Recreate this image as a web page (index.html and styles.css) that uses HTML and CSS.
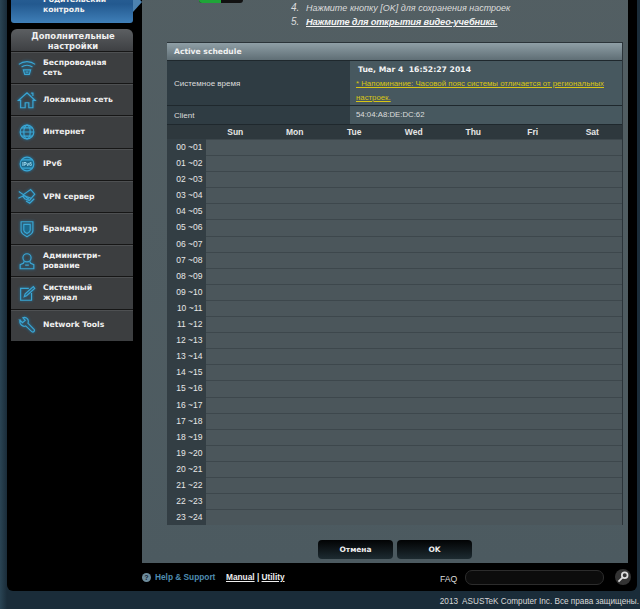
FILE: index.html
```html
<html>
	<head>
		<meta charset="UTF-8"/>
		<link rel="stylesheet" href="styles.css">
	</head>
	<body>
		<div class="frame">
			<div class="mainRow">
				<div class="side">
					<div class="parentItem">
						<svg class="parentIcon" viewBox="0 0 16 16"><rect x="1" y="1" width="14" height="14" rx="2" fill="#cfe6f5"/><path d="M6 7h4v5H6z" fill="#1f5d96"/><path d="M6.500 7V5a1.500 1.500 0 0 1 3 0v2" fill="none" stroke="#1f5d96"/></svg>
						<span>Родительский<br>контроль</span>
					</div>
					<div class="menu">
						<div class="menuHead">Дополнительные<br>настройки</div>
						<div class="menuItem">
							<svg class="icon" viewBox="0 0 22 22"><path d="M2 7c5-4 13-4 18 0M5 10c3.500-2.500 8.500-2.500 12 0"/><path d="M7 13h8l-1.500 5h-5z"/><path d="M9.500 15.500h3"/></svg>
							<span>Беспроводная<br>сеть</span>
						</div>
						<div class="menuItem">
							<svg class="icon" viewBox="0 0 22 22"><path d="M1.500 11.500 11 3l9 8.500h-2.500V19.500h-4.500v-5.500h-4v5.500H4V11.500z"/><path d="M15.500 3.500h2v3"/></svg>
							<span>Локальная сеть</span>
						</div>
						<div class="menuItem">
							<svg class="icon" viewBox="0 0 22 22"><circle cx="11" cy="11" r="7.500"/><ellipse cx="11" cy="11" rx="3.500" ry="7.500"/><path d="M3.500 11h15M5 6.500h12M5 15.500h12"/></svg>
							<span>Интернет</span>
						</div>
						<div class="menuItem">
							<svg class="icon" viewBox="0 0 22 22"><circle cx="11" cy="11" r="7.500" fill="#1d6a8c"/><path d="M5 6.500h12M5 15.500h12"/><text x="11" y="13" class="iconText">IPv6</text></svg>
							<span>IPv6</span>
						</div>
						<div class="menuItem">
							<svg class="icon" viewBox="0 0 22 22"><path d="M2 6l5 3.500 8-5.500 4.500 5-6 7-5-2-2.500-3.500M1.500 13.500l6-3 8 3M10 16.500l4 2.500 5-5"/><path d="M7 9.500l6 5"/></svg>
							<span>VPN сервер</span>
						</div>
						<div class="menuItem">
							<svg class="icon" viewBox="0 0 22 22"><path d="M4.500 3h13v10c0 3-3.500 5-6.500 6.500C8 18 4.500 16 4.500 13z"/><path d="M7.500 6h7v6.500c0 1.500-2 2.800-3.500 3.500-1.500-.7-3.500-2-3.500-3.500z" fill="#1d6a8c"/></svg>
							<span>Брандмауэр</span>
						</div>
						<div class="menuItem">
							<svg class="icon" viewBox="0 0 22 22"><circle cx="11" cy="7.500" r="4.500"/><path d="M8 11.500 7 13.500 3.500 15v4.500h15V15L15 13.500l-1-2M9 15.500h4"/></svg>
							<span>Администри-<br>рование</span>
						</div>
						<div class="menuItem">
							<svg class="icon" viewBox="0 0 22 22"><path d="M16 11v8H4V6h9"/><path d="M8 15l1-3 9-8 1.500 2-9 8z"/></svg>
							<span>Системный<br>журнал</span>
						</div>
						<div class="menuItem">
							<svg class="icon" viewBox="0 0 22 22"><path d="M3 5.500 6 8.500 9 6 6.500 3c2.500-1 6 .500 6 4 0 1-.2 1.500-.5 2l7 7c1 1.500-1 3.500-2.500 2.500l-7-6.500c-3 1.500-7.500-2-6-6.500z"/></svg>
							<span>Network Tools</span>
						</div>
					</div>
				</div>
				<div class="content">
					<div class="intro">
						<div class="toggle"><div class="toggleOn"></div></div>
						<div class="steps">
							<div class="step"><span class="stepNo">4.</span><span class="stepText">Нажмите кнопку [OK] для сохранения настроек</span></div>
							<div class="step"><span class="stepNo">5.</span><a class="stepLink" href="#">Нажмите для открытия видео-учебника.</a></div>
						</div>
					</div>
					<div class="schedule">
						<div class="scheduleTitle">Active schedule</div>
						<div class="infoRow">
							<div class="infoLabel">Системное время</div>
							<div class="infoValue">
								<div class="clock">Tue, Mar 4&nbsp; 16:52:27 2014</div>
								<a class="warn" href="#">* Напоминание: Часовой пояс системы отличается от региональных настроек.</a>
							</div>
						</div>
						<div class="infoRow">
							<div class="infoLabel">Client</div>
							<div class="infoValue clientValue">54:04:A8:DE:DC:62</div>
						</div>
						<div class="days">
							<div></div><div>Sun</div><div>Mon</div><div>Tue</div><div>Wed</div><div>Thu</div><div>Fri</div><div>Sat</div>
						</div>
						<div class="hour"><div class="hourName">00 ~01</div><div class="slots"></div></div>
						<div class="hour"><div class="hourName">01 ~02</div><div class="slots"></div></div>
						<div class="hour"><div class="hourName">02 ~03</div><div class="slots"></div></div>
						<div class="hour"><div class="hourName">03 ~04</div><div class="slots"></div></div>
						<div class="hour"><div class="hourName">04 ~05</div><div class="slots"></div></div>
						<div class="hour"><div class="hourName">05 ~06</div><div class="slots"></div></div>
						<div class="hour"><div class="hourName">06 ~07</div><div class="slots"></div></div>
						<div class="hour"><div class="hourName">07 ~08</div><div class="slots"></div></div>
						<div class="hour"><div class="hourName">08 ~09</div><div class="slots"></div></div>
						<div class="hour"><div class="hourName">09 ~10</div><div class="slots"></div></div>
						<div class="hour"><div class="hourName">10 ~11</div><div class="slots"></div></div>
						<div class="hour"><div class="hourName">11 ~12</div><div class="slots"></div></div>
						<div class="hour"><div class="hourName">12 ~13</div><div class="slots"></div></div>
						<div class="hour"><div class="hourName">13 ~14</div><div class="slots"></div></div>
						<div class="hour"><div class="hourName">14 ~15</div><div class="slots"></div></div>
						<div class="hour"><div class="hourName">15 ~16</div><div class="slots"></div></div>
						<div class="hour"><div class="hourName">16 ~17</div><div class="slots"></div></div>
						<div class="hour"><div class="hourName">17 ~18</div><div class="slots"></div></div>
						<div class="hour"><div class="hourName">18 ~19</div><div class="slots"></div></div>
						<div class="hour"><div class="hourName">19 ~20</div><div class="slots"></div></div>
						<div class="hour"><div class="hourName">20 ~21</div><div class="slots"></div></div>
						<div class="hour"><div class="hourName">21 ~22</div><div class="slots"></div></div>
						<div class="hour"><div class="hourName">22 ~23</div><div class="slots"></div></div>
						<div class="hour"><div class="hourName">23 ~24</div><div class="slots"></div></div>
					</div>
					<div class="buttons">
						<button type="button" class="btn">Отмена</button>
						<button type="button" class="btn">OK</button>
					</div>
				</div>
			</div>
			<div class="footer">
				<div class="helpIcon">?</div>
				<div class="helpText">Help &amp; Support</div>
				<div class="helpLinks"><a href="#">Manual</a> | <a href="#">Utility</a></div>
				<div class="faq">FAQ</div>
				<input type="text" class="faqBox"/>
				<div class="faqBtn">
					<svg viewBox="0 0 14 14"><circle cx="8.500" cy="5.500" r="2.500"/><path d="M6.500 7.500 3 11"/></svg>
				</div>
			</div>
		</div>
		<div class="copyright">2013&nbsp; ASUSTeK Computer Inc. Все права защищены.</div>
	</body>
</html>
```

FILE: styles.css
```css
html,body{
	margin:0;
	height:609px;
	overflow:hidden;
}
body{
	background:linear-gradient(90deg,#2a4454,#1a2c39 7px);
	font-family:"Liberation Sans",sans-serif;
	font-size:8px;
	color:#ddd;
}
a{
	color:inherit;
}
.frame{
	margin:-40px 3px 0 7px;
	height:631px;
	background:#000;
	border-radius:0 0 6px 6px;
	display:flex;
	flex-direction:column;
}
.mainRow{
	display:flex;
	height:603px;
}
.side{
	width:122px;
	margin:0 9px 0 4px;
	font-family:"DejaVu Sans",sans-serif;
	font-weight:bold;
	font-size:7.700px;
	line-height:9.500px;
	color:#f0f0f0;
}
.parentItem{
	position:relative;
	height:63px;
	box-sizing:border-box;
	padding:35px 0 0 32px;
	background:linear-gradient(#3d78b0,#23598f 70%,#3f7fb8);
	border-radius:0 0 3px 3px;
}
.parentItem:after{
	content:"";
	position:absolute;
	right:-9px;
	top:32px;
	border-left:9px solid #4c82b0;
	border-top:10px solid transparent;
	border-bottom:10px solid transparent;
}
.parentIcon{
	position:absolute;
	left:8px;
	top:26px;
	width:15px;
	height:15px;
}
.menu{
	margin-top:6px;
}
.menuHead{
	height:22px;
	box-sizing:border-box;
	padding:3px 0 0 2px;
	text-align:center;
	font-size:8.400px;
	background:linear-gradient(#5c5f62,#3e4043);
	border-radius:6px 6px 0 0;
}
.menuItem{
	height:32.200px;
	box-sizing:border-box;
	display:flex;
	align-items:center;
	padding-left:6px;
	background:#3c3e40;
	border-top:1px solid #161616;
	box-shadow:inset 0 1px #4e5052;
}
.icon{
	width:20px;
	height:20px;
	margin-right:6px;
	flex:none;
	fill:none;
	stroke:#3aa6d4;
	stroke-width:1.300;
	filter:drop-shadow(0 0 1.500px #1d7fb0);
}
.iconText{
	font:bold 5px "Liberation Sans",sans-serif;
	text-anchor:middle;
	fill:#a8e0f5;
	stroke:none;
}
.content{
	width:486px;
	height:603px;
	background:linear-gradient(#535f63,#4c5a60);
}
.intro{
	display:flex;
	height:68px;
	font-size:10px;
	font-style:italic;
	color:#dcdcdc;
}
.toggle{
	width:44px;
	height:12px;
	margin:31px 0 0 57px;
	background:#111;
	border-radius:0 0 3px 3px;
}
.toggleOn{
	width:22px;
	height:12px;
	background:#1fa538;
	border-radius:0 0 0 3px;
}
.steps{
	margin:41px 0 0 48px;
	line-height:14px;
}
.step{
	display:flex;
}
.stepNo{
	width:15px;
}
.stepText{
	font-size:9px;
}
.stepLink{
	font-weight:bold;
	font-size:9.300px;
	letter-spacing:-.17px;
	color:#f4f4f4;
}
.schedule{
	width:456px;
	margin:14px 0 0 25px;
	border-right:1px solid #2b3439;
	box-sizing:border-box;
}
.scheduleTitle{
	height:18px;
	box-sizing:border-box;
	padding:4px 0 0 7px;
	font-family:"DejaVu Sans",sans-serif;
	font-weight:bold;
	font-size:7.600px;
	color:#f0f0f0;
	background:linear-gradient(#8f9fa6,#5f6e75);
	border-top:1px solid #2b3439;
}
.infoRow{
	display:flex;
	border-top:1px solid #1f282d;
}
.infoLabel{
	width:183px;
	flex:none;
	box-sizing:border-box;
	padding-left:7px;
	display:flex;
	align-items:center;
	background:#2f3c43;
}
.infoValue{
	flex:1;
	padding:2px 10px 0 6px;
	line-height:14px;
	font-size:7.800px;
	background:#47585f;
}
.clientValue{
	padding-top:1px;
	padding-bottom:1px;
	line-height:16px;
}
.clock{
	padding-left:2px;
	font-family:"DejaVu Sans",sans-serif;
	font-weight:bold;
	font-size:7.700px;
	color:#f4f4f4;
}
.warn{
	color:#d8c514;
}
.days{
	display:grid;
	grid-template-columns:38.500px repeat(7,59.500px);
	height:14px;
	line-height:14px;
	text-align:center;
	font-size:8.500px;
	font-weight:bold;
	color:#e6e6e6;
	background:#2e383d;
	border-top:1px solid #1f282d;
}
.hour{
	display:flex;
	height:16.100px;
}
.hourName{
	width:38.500px;
	flex:none;
	box-sizing:border-box;
	padding-right:3px;
	text-align:right;
	line-height:16px;
	font-size:8.500px;
	color:#e8e8e8;
	background:#333e44;
}
.slots{
	flex:1;
	background:#4b565b;
	border-top:1px solid #3d474c;
}
.buttons{
	display:flex;
	gap:4px;
	margin:15px 0 0 176px;
}
.btn{
	width:75px;
	height:19px;
	padding:0;
	border:0;
	border-radius:4px;
	background:linear-gradient(#020304,#1d2b31);
	font-family:"DejaVu Sans",sans-serif;
	font-weight:bold;
	font-size:7.500px;
	color:#eee;
}
.footer{
	display:flex;
	align-items:center;
	height:28px;
	padding-left:135px;
}
.helpIcon{
	width:9px;
	height:9px;
	line-height:9px;
	border-radius:50%;
	background:#6d8c9c;
	color:#123;
	text-align:center;
	font-size:7px;
	font-weight:bold;
}
.helpText{
	margin-left:4px;
	width:71px;
	font-size:8.300px;
	font-weight:bold;
	color:#4f8db0;
}
.helpLinks{
	width:214px;
	font-size:8.300px;
	font-weight:bold;
	color:#eee;
}
.faq{
	width:25px;
	font-size:8.700px;
	color:#ddd;
	padding-top:3px;
}
.faqBox{
	width:139px;
	height:15px;
	box-sizing:border-box;
	padding:0;
	background:#0c0c0c;
	border:1px solid #2c2c2c;
	border-radius:7px;
}
.faqBtn{
	width:16px;
	height:16px;
	margin-left:11px;
	border-radius:50%;
	background:#333;
}
.faqBtn svg{
	display:block;
	width:16px;
	height:16px;
	fill:none;
	stroke:#ddd;
	stroke-width:1.500;
}
.copyright{
	margin-top:5px;
	padding-right:1px;
	text-align:right;
	font-size:8.200px;
	line-height:12px;
	color:#d8d8d8;
}
```
